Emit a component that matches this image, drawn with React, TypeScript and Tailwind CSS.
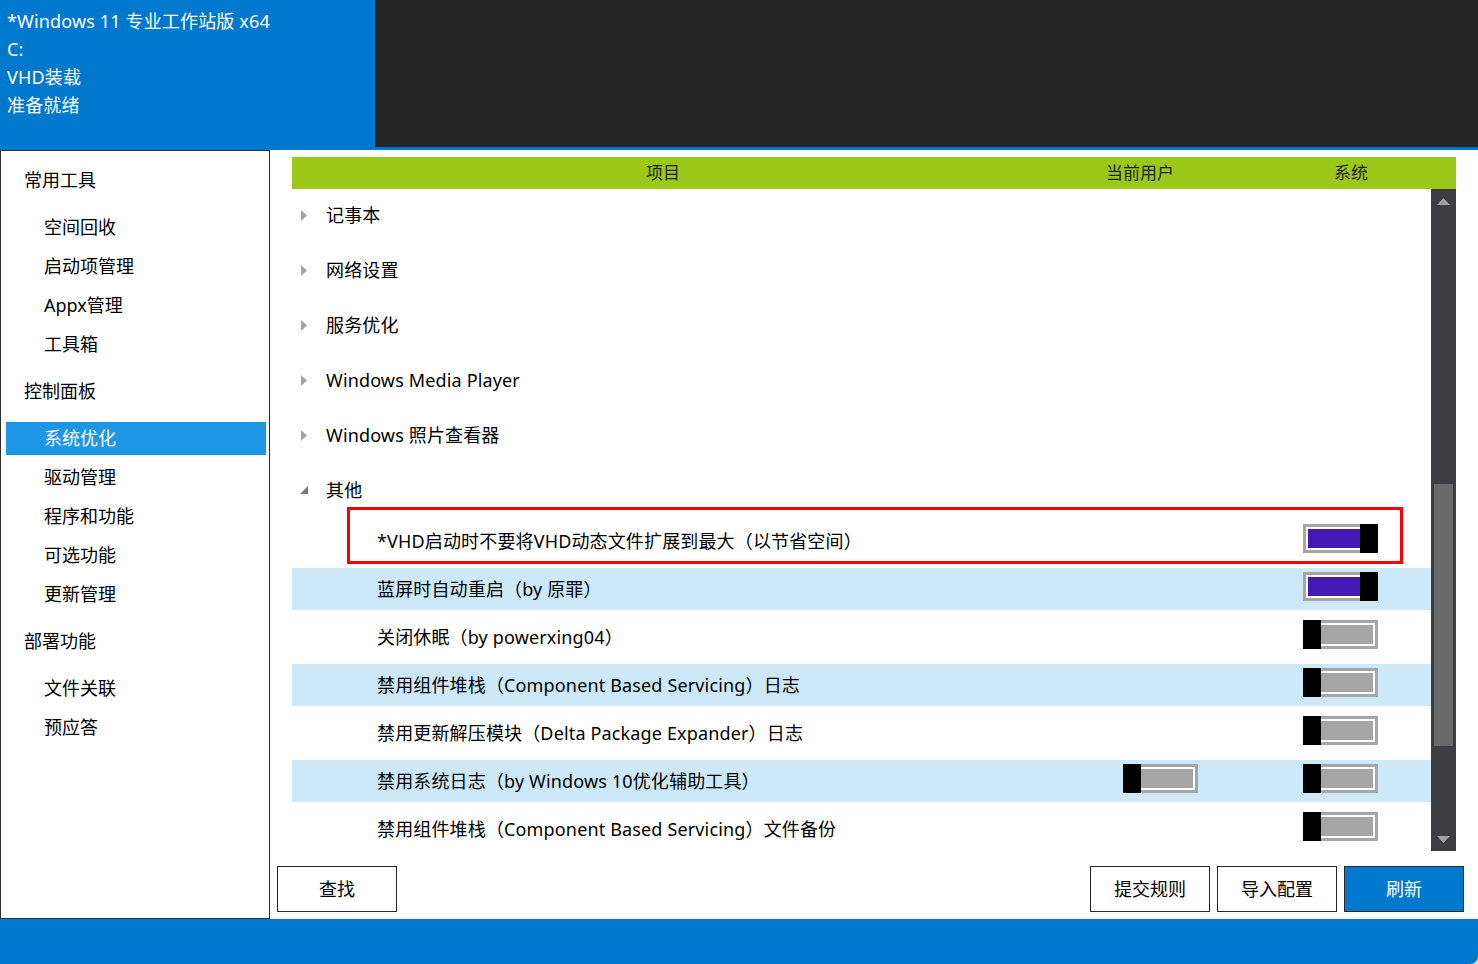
import React from "react";

const FONT = { fontFamily: '"Noto Sans", "Noto Sans CJK SC", sans-serif' };

type NavItem = { label: string; header?: boolean; active?: boolean };

const NAV: NavItem[] = [
  { label: "常用工具", header: true },
  { label: "空间回收" },
  { label: "启动项管理" },
  { label: "Appx管理" },
  { label: "工具箱" },
  { label: "控制面板", header: true },
  { label: "系统优化", active: true },
  { label: "驱动管理" },
  { label: "程序和功能" },
  { label: "可选功能" },
  { label: "更新管理" },
  { label: "部署功能", header: true },
  { label: "文件关联" },
  { label: "预应答" },
];

const GROUPS = ["记事本", "网络设置", "服务优化", "Windows Media Player", "Windows 照片查看器"];

type Rule = { text: string; sys: boolean; user?: boolean };

const RULES: Rule[] = [
  { text: "*VHD启动时不要将VHD动态文件扩展到最大（以节省空间）", sys: true },
  { text: "蓝屏时自动重启（by 原罪）", sys: true },
  { text: "关闭休眠（by powerxing04）", sys: false },
  { text: "禁用组件堆栈（Component Based Servicing）日志", sys: false },
  { text: "禁用更新解压模块（Delta Package Expander）日志", sys: false },
  { text: "禁用系统日志（by Windows 10优化辅助工具）", sys: false, user: false },
  { text: "禁用组件堆栈（Component Based Servicing）文件备份", sys: false },
];

function Toggle({ on }: { on: boolean }) {
  return (
    <div className="relative w-[75px] h-[29px] bg-[#a6a6a6] p-[3px]">
      <div className={`w-full h-full border-2 border-white ${on ? "bg-[#4419b4]" : "bg-[#a6a6a6]"}`} />
      <div className={`absolute top-0 bottom-0 w-[18px] bg-black ${on ? "right-0" : "left-0"}`} />
    </div>
  );
}

function RightArrow() {
  return (
    <svg width="6" height="11" viewBox="0 0 6 11" className="block">
      <path d="M0 0 L6 5.5 L0 11 Z" fill="#a3a3a3" />
    </svg>
  );
}

function DownRightArrow() {
  return (
    <svg width="8" height="8" viewBox="0 0 8 8" className="block">
      <path d="M8 0 L8 8 L0 8 Z" fill="#7a7a7a" />
    </svg>
  );
}

function Button({ label, primary }: { label: string; primary?: boolean }) {
  return (
    <div
      className={`w-[120px] h-[46px] border border-[#262626] flex items-center justify-center text-[18px] ${
        primary ? "bg-[#0078ce] text-white" : "bg-white text-black"
      }`}
    >
      {label}
    </div>
  );
}

export default function App() {
  return (
    <div className="bg-[#d9d9d9] w-[1478px] h-[964px]" style={FONT}>
      <div className="w-[1478px] h-[964px] bg-[#0078ce] flex flex-col overflow-hidden rounded-br-[8px]">
        {/* top info bar */}
        <div className="h-[150px] flex shrink-0">
          <div className="w-[375px] pl-[7px] pt-[7px] text-white text-[18px] leading-[28px] tracking-[0.15px]">
            <div>*Windows 11 专业工作站版 x64</div>
            <div>C:</div>
            <div>VHD装载</div>
            <div>准备就绪</div>
          </div>
          <div className="flex-1 h-[147px] bg-[#252525]" />
        </div>

        <div className="h-[769px] flex shrink-0">
          {/* left navigation */}
          <div className="w-[270px] bg-white border border-[#2d2d2d] pt-[2px] text-[18px] text-black">
            {NAV.map((n, i) =>
              n.header ? (
                <div key={i} className="h-[39px] my-[8px] flex items-center pl-[23px]">
                  {n.label}
                </div>
              ) : (
                <div key={i} className="h-[39px] py-[3px] ml-[5px] mr-[3px]">
                  <div
                    className={`h-[33px] flex items-center pl-[38px] ${
                      n.active ? "bg-[#1e96e6] text-white" : ""
                    }`}
                  >
                    {n.label}
                  </div>
                </div>
              )
            )}
          </div>

          {/* main panel */}
          <div className="flex-1 bg-white flex flex-col pt-[7px]">
            <div className="mx-[22px] h-[32px] bg-[#9dc819] grid grid-cols-[742px_212px_1fr] items-center text-[17px] text-[#1e1e1e]">
              <div className="text-center">项目</div>
              <div className="text-center">当前用户</div>
              <div className="text-center">系统</div>
            </div>

            <div className="mx-[22px] h-[662px] flex">
              <div className="flex-1 overflow-hidden text-[18px] text-black tracking-[0.15px]">
                <div className="mt-[-1px]">
                  {GROUPS.map((g) => (
                    <div key={g} className="h-[55px] flex items-center">
                      <div className="w-[34px] pl-[9px]">
                        <RightArrow />
                      </div>
                      <span>{g}</span>
                    </div>
                  ))}
                  <div className="h-[54px] flex items-center">
                    <div className="w-[34px] pl-[8px]">
                      <DownRightArrow />
                    </div>
                    <span>其他</span>
                  </div>

                  {RULES.map((r, i) => (
                    <div key={i} className="relative h-[48px] py-[3px]">
                      <div
                        className={`h-[42px] flex items-center pl-[85px] ${
                          i % 2 === 1 ? "bg-[#cce8f9]" : ""
                        }`}
                      >
                        <span className="flex-1">{r.text}</span>
                        <div className="w-[75px] mr-[105px] mb-[5px]">
                          {r.user !== undefined && <Toggle on={r.user} />}
                        </div>
                        <div className="mr-[53px] mb-[5px]">
                          <Toggle on={r.sys} />
                        </div>
                      </div>
                      {i === 0 && (
                        <div className="absolute left-[55px] top-[-10px] w-[1056px] h-[57px] border-[3px] border-[#ff0000] pointer-events-none" />
                      )}
                    </div>
                  ))}
                </div>
              </div>

              {/* scrollbar */}
              <div className="w-[25px] bg-[#3e3d42] flex flex-col items-center">
                <div className="h-[24px] flex items-center justify-center">
                  <svg width="13" height="7" viewBox="0 0 13 7">
                    <path d="M6.5 0 L13 7 L0 7 Z" fill="#a0a0a0" />
                  </svg>
                </div>
                <div className="h-[271px]" />
                <div className="w-[19px] h-[262px] bg-[#6a6a6a]" />
                <div className="flex-1" />
                <div className="h-[24px] flex items-center justify-center">
                  <svg width="13" height="7" viewBox="0 0 13 7">
                    <path d="M0 0 L13 0 L6.5 7 Z" fill="#a0a0a0" />
                  </svg>
                </div>
              </div>
            </div>

            <div className="mt-[15px] flex pl-[7px] pr-[14px]">
              <Button label="查找" />
              <div className="flex-1" />
              <div className="flex gap-[7px]">
                <Button label="提交规则" />
                <Button label="导入配置" />
                <Button label="刷新" primary />
              </div>
            </div>
          </div>
        </div>

        <div className="flex-1" />
      </div>
    </div>
  );
}
